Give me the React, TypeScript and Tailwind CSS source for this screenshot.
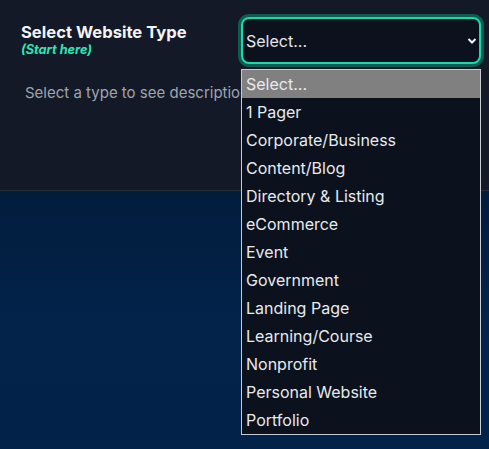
import React from "react";

const items = [
  "Select...",
  "1 Pager",
  "Corporate/Business",
  "Content/Blog",
  "Directory & Listing",
  "eCommerce",
  "Event",
  "Government",
  "Landing Page",
  "Learning/Course",
  "Nonprofit",
  "Personal Website",
  "Portfolio",
];

export default function App() {
  return (
    <div
      className="relative w-[489px] h-[449px] overflow-hidden bg-[#03224a]"
      style={{ fontFamily: "Inter, 'Noto Sans', sans-serif" }}
    >
      <div className="h-[191px] bg-[#131927] border-b border-[#252c3a] pl-[21px] pr-2 pt-[17px]">
        <div className="flex justify-between">
          <div className="pt-[4px]">
            <div className="text-[16.6px] leading-[22px] font-bold text-[#f3f4f6]">Select Website Type</div>
            <div className="text-[12.7px] leading-[14px] font-bold italic text-[#2ee6b6]">(Start here)</div>
          </div>
          <div className="w-[240px] h-[47px] rounded-[8px] border-2 border-[#19d9a8] bg-[#0b111d] ring-[3px] ring-[#0f5a52] flex items-center justify-between pl-[3px] pr-[2px]">
            <span className="text-[16px] text-[#e5e7eb]">Select...</span>
            <svg width="10" height="8" viewBox="0 0 10 8" fill="none">
              <path d="M1.5 2 L5 5.5 L8.5 2" stroke="#f3f4f6" strokeWidth="2" />
            </svg>
          </div>
        </div>
        <div className="mt-[18px] pl-[4px] text-[15px] text-[#a0a5ae]">Select a type to see description</div>
      </div>
      <div className="h-[258px] bg-gradient-to-b from-[#021c3c] to-[#03224a] via-[#03234a]" />
      <div className="absolute left-[241px] top-[69px] w-[240px] border border-[#c8ccd2] bg-[#0b111d]">
        {items.map((it, i) => (
          <div
            key={it}
            className={`h-[28px] leading-[28px] pl-[4px] text-[16px] text-[#e8eaed] ${i === 0 ? "bg-[#808080]" : ""}`}
          >
            {it}
          </div>
        ))}
      </div>
    </div>
  );
}
